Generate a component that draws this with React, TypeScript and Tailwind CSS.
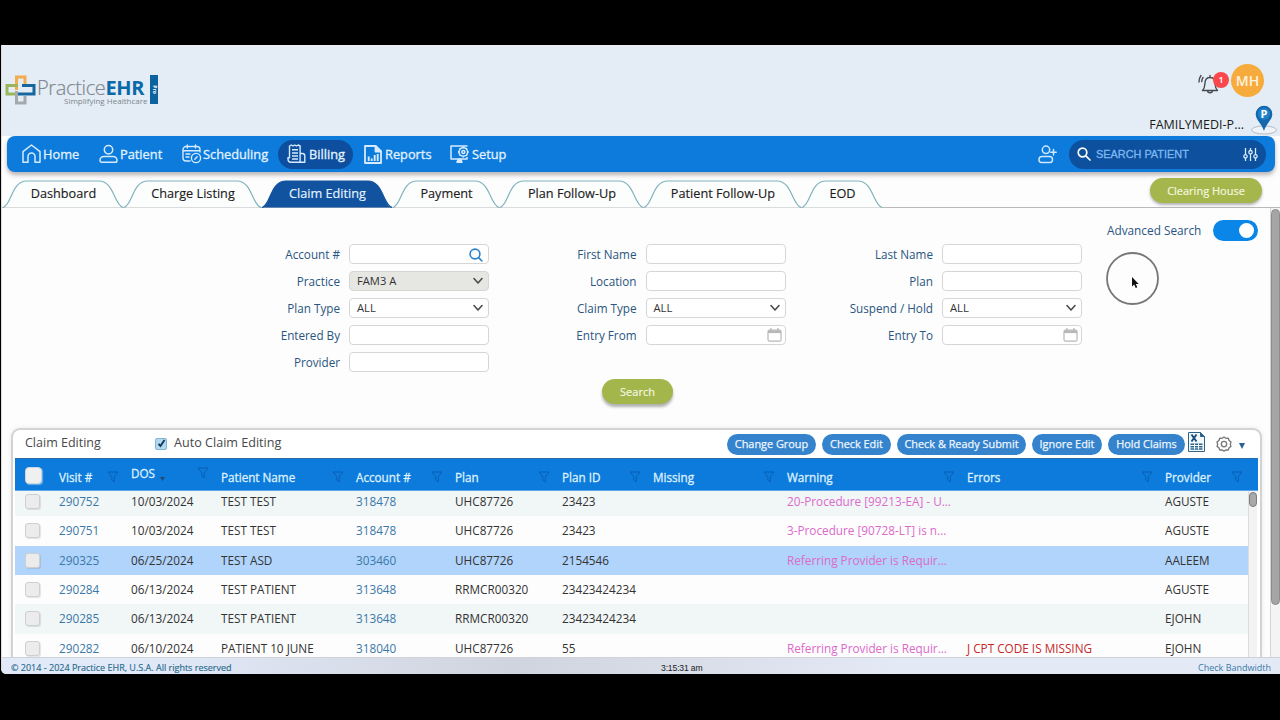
import type { ReactNode } from "react";

const Funnel = () => (
  <svg width="12" height="12" viewBox="0 0 12 12" fill="none" stroke="#0a5fb4" strokeWidth="1" className="shrink-0">
    <path d="M1 1h10L7.3 5.8V10.8L4.8 9V5.8Z" />
  </svg>
);

const HomeIcon = () => (
  <svg width="19" height="20" viewBox="0 0 19 20" fill="none" stroke="#d6ebff" strokeWidth="1.5" strokeLinejoin="round">
    <path d="M1 7.6 9.5 1 18 7.6V18.2H13V12.6a3.4 3.4 0 0 0-7 0V18.2H1Z" />
  </svg>
);
const PatientIcon = () => (
  <svg width="19" height="20" viewBox="0 0 19 20" fill="none" stroke="#d6ebff" strokeWidth="1.5">
    <circle cx="9.5" cy="5.8" r="4.2" />
    <path d="M5 12.4h9c2.300 0 4 1.800 4 4 0 1.100-.7 1.800-1.700 1.800H2.700C1.700 18.200 1 17.500 1 16.400c0-2.200 1.700-4 4-4Z" />
  </svg>
);
const ScheduleIcon = () => (
  <svg width="20" height="20" viewBox="0 0 20 20" fill="none" stroke="#d6ebff" strokeWidth="1.4" strokeLinecap="round">
    <path d="M8 17H4a3 3 0 0 1-3-3V5.500a3 3 0 0 1 3-3h11a3 3 0 0 1 3 3V8M1 6.800h17M5.300 1v3M13.500 1v3M4 10h4M4 13h3" />
    <circle cx="14" cy="14" r="4.600" />
    <path d="m12.800 15.200 2.400-2.400" />
  </svg>
);
const BillingIcon = () => (
  <svg width="19" height="20" viewBox="0 0 19 20" fill="none" stroke="#d6ebff" strokeWidth="1.4" strokeLinejoin="round">
    <path d="M13.500 18.300H4a3 3 0 0 1-3-3v-1.500h1.500V2l1.800-1 1.700 1 1.700-1 1.700 1 1.700-1 2 1v16.300ZM13.500 9.500h2a2.300 2.300 0 0 1 2.300 2.300v6.500h-4.300M5 5.800h6M5 9h6M5 12h6M5 15h6" />
  </svg>
);
const ReportsIcon = () => (
  <svg width="18" height="19" viewBox="0 0 18 19" fill="none" stroke="#d6ebff" strokeWidth="1.800" strokeLinejoin="round">
    <path d="M1 1h10.500L17 6.500V18H1Z" />
    <path d="M11.500 1v5.500H17Z" fill="#d6ebff" />
    <path d="M4.700 11.500V16M7.700 13.500V16M10.700 10v6M13.700 9v7" strokeWidth="1.900" />
  </svg>
);
const SetupIcon = () => (
  <svg width="19" height="19" viewBox="0 0 19 19" fill="none" stroke="#d6ebff" strokeWidth="1.500" strokeLinejoin="round">
    <path d="M17 1.500V1H1v13h16v-2" />
    <circle cx="13.300" cy="7" r="4.300" />
    <path d="M13.300 1.600v1.500M13.300 10.900v1.500M7.900 7h1.500M17.200 7h1.500M9.500 3.200l1 1M16.100 9.800l1 1M17.100 3.200l-1 1M10.500 9.800l-1 1" />
    <circle cx="13.300" cy="7" r="1.500" />
    <path d="M7 17.300h5l-1.200-3H8.200Z" fill="#d6ebff" />
  </svg>
);

const navItems: { label: string; icon: ReactNode; cls: string }[] = [
  { label: "Home", icon: <HomeIcon />, cls: "w-[77px] pl-[8px] gap-[2px]" },
  { label: "Patient", icon: <PatientIcon />, cls: "w-[83px] pl-[8px] gap-[2px]" },
  { label: "Scheduling", icon: <ScheduleIcon />, cls: "w-[104px] pl-[8px] gap-[1px]" },
  { label: "Billing", icon: <BillingIcon />, cls: "w-[75px] pl-[9px] gap-[3px] bg-[#0d4f9e] rounded-full" },
  { label: "Reports", icon: <ReportsIcon />, cls: "w-[89px] pl-[11px] gap-[3px]" },
  { label: "Setup", icon: <SetupIcon />, cls: "w-[75px] pl-[8px] gap-[3px]" },
];

const tabs = [
  { label: "Dashboard", w: 121, box: "w-[121px]", active: false },
  { label: "Charge Listing", w: 138, box: "w-[138px]", active: false },
  { label: "Claim Editing", w: 131, box: "w-[131px]", active: true },
  { label: "Payment", w: 107, box: "w-[107px]", active: false },
  { label: "Plan Follow-Up", w: 144, box: "w-[144px]", active: false },
  { label: "Patient Follow-Up", w: 158, box: "w-[158px]", active: false },
  { label: "EOD", w: 81, box: "w-[81px]", active: false },
];

const Tab = ({ label, w, box, active }: (typeof tabs)[number]) => (
  <div className={`relative flex h-[28px] shrink-0 items-center justify-center pb-[1px] pl-[2px] ${box}`}>
    <svg className="absolute inset-0" width={w} height="28" viewBox={`0 0 ${w} 28`}>
      <path
        d={`M1 27.500C10 25 9 1 25 1H${w - 24}C${w - 9} 1 ${w - 9} 25 ${w} 27.500`}
        fill={active ? "#12539f" : "#fcfefe"}
        stroke={active ? "#12539f" : "#7fb3bd"}
        strokeWidth="1.200"
      />
    </svg>
    <span className={`relative whitespace-nowrap text-[12.700px] font-medium ${active ? "text-[#e8f3ff] [-webkit-text-stroke:0.150px_#e8f3ff]" : "text-[#1c1c1c] [-webkit-text-stroke:0.150px_#1c1c1c]"}`}>{label}</span>
  </div>
);

const Chevron = () => (
  <svg width="10" height="8" viewBox="0 0 10 8" fill="none" stroke="#4c4c4c" strokeWidth="1.600" strokeLinecap="round" strokeLinejoin="round">
    <path d="m1 1.500 4 4.500 4-4.500" />
  </svg>
);
const Calendar = () => (
  <svg width="15" height="14" viewBox="0 0 15 14" fill="none" stroke="#b8b8b8" strokeWidth="1.200">
    <rect x="1" y="2.200" width="13" height="11" rx="1.500" />
    <path d="M1 3.800h13" strokeWidth="2.600" />
    <path d="M4 .3v2.500M11 .3v2.500" strokeWidth="1.600" />
  </svg>
);
const Magnifier = () => (
  <svg width="14" height="14" viewBox="0 0 14 14" fill="none" stroke="#2b83c9" strokeWidth="1.600" strokeLinecap="round">
    <circle cx="6" cy="6" r="4.900" />
    <path d="m9.600 9.600 3.300 3.400" />
  </svg>
);

type F = { label: string; value?: string; kind?: "select" | "date" | "lookup"; muted?: boolean };
const columns: { cls: string; fields: F[] }[] = [
  {
    cls: "w-[229px]",
    fields: [
      { label: "Account #", kind: "lookup" },
      { label: "Practice", kind: "select", value: "FAM3 A", muted: true },
      { label: "Plan Type", kind: "select", value: "ALL" },
      { label: "Entered By" },
      { label: "Provider" },
    ],
  },
  {
    cls: "w-[296.500px]",
    fields: [
      { label: "First Name" },
      { label: "Location" },
      { label: "Claim Type", kind: "select", value: "ALL" },
      { label: "Entry From", kind: "date" },
    ],
  },
  {
    cls: "w-[296.500px]",
    fields: [
      { label: "Last Name" },
      { label: "Plan" },
      { label: "Suspend / Hold", kind: "select", value: "ALL" },
      { label: "Entry To", kind: "date" },
    ],
  },
];

const Field = ({ label, value, kind, muted }: F) => (
  <div className="flex h-[20px] items-center justify-end gap-[9px]">
    <span className="whitespace-nowrap pt-[1px] text-[11.700px] leading-[19px] text-[#2a5580]">{label}</span>
    <div
      className={`flex h-[20px] w-[140px] items-center justify-between rounded-[4px] border border-[#d6d6d6] pl-[7px] ${
        kind === "select" ? "pr-[5px]" : "pr-[3px]"
      } ${muted ? "bg-[#e6e6e2]" : "bg-white"}`}
    >
      <span className="text-[11.200px] leading-[18px] text-[#333]">{value}</span>
      {kind === "select" && <Chevron />}
      {kind === "date" && <Calendar />}
      {kind === "lookup" && (
        <span className="pr-[2px] pt-[2px]">
          <Magnifier />
        </span>
      )}
    </div>
  </div>
);

const headGrid = "grid grid-cols-[44px_72px_90px_135px_99px_107px_91px_134px_180px_198px_90px]";
const rowGrid = "grid grid-cols-[44px_72px_90px_135px_99px_107px_91px_134px_180px_198px_84px]";

const headers = ["Visit #", "DOS", "Patient Name", "Account #", "Plan", "Plan ID", "Missing", "Warning", "Errors", "Provider"];

const rows = [
  ["290752", "10/03/2024", "TEST TEST", "318478", "UHC87726", "23423", "", "20-Procedure [99213-EA] - U...", "", "AGUSTE"],
  ["290751", "10/03/2024", "TEST TEST", "318478", "UHC87726", "23423", "", "3-Procedure [90728-LT] is n...", "", "AGUSTE"],
  ["290325", "06/25/2024", "TEST ASD", "303460", "UHC87726", "2154546", "", "Referring Provider is Requir...", "", "AALEEM"],
  ["290284", "06/13/2024", "TEST PATIENT", "313648", "RRMCR00320", "23423424234", "", "", "", "AGUSTE"],
  ["290285", "06/13/2024", "TEST PATIENT", "313648", "RRMCR00320", "23423424234", "", "", "", "EJOHN"],
  ["290282", "06/10/2024", "PATIENT 10 JUNE", "318040", "UHC87726", "55", "", "Referring Provider is Requir...", "J CPT CODE IS MISSING", "EJOHN"],
];

const rowBg = ["bg-[#f1f6f7]", "bg-[#fdfdfd]", "bg-[#b0d4fb]", "bg-[#fdfdfd]", "bg-[#f1f6f7]", "bg-[#fdfdfd]"];

const cellColor = (i: number) =>
  i === 0 || i === 3 ? "text-[#3a78a8]" : i === 7 ? "text-[#dc6acb]" : i === 8 ? "text-[#c4292b]" : "text-[#333]";

const actions = [
  { label: "Change Group", cls: "w-[89px]" },
  { label: "Check Edit", cls: "w-[69px]" },
  { label: "Check & Ready Submit", cls: "w-[129px]" },
  { label: "Ignore Edit", cls: "w-[70px]" },
  { label: "Hold Claims", cls: "w-[77px]" },
];

const Logo = () => (
  <div className="flex items-start">
    <svg className="-ml-[1px] shrink-0" width="31" height="30" viewBox="0 0 31 30" fill="none" strokeWidth="3">
      <path d="M11.500 15V2H20V12" stroke="#f2ac4b" />
      <path d="M13 10.500H2V19H11" stroke="#9ab55a" />
      <path d="M17 10.500H29V19H13" stroke="#16679f" />
      <path d="M11.500 16V28H20V21" stroke="#a3a9ad" />
    </svg>
    <div className="flex w-[113px] shrink-0 flex-col pt-px">
      <div className="ml-[1px] h-[22px] whitespace-nowrap text-[20px] leading-[23px] tracking-[-0.350px] text-[#808890]">
        <span className="font-light [-webkit-text-stroke:0.200px_#808890]">Practice</span>
        <span className="font-bold text-[#0a6aa9]">EHR</span>
      </div>
      <div className="ml-[28px] whitespace-nowrap text-[8px] leading-[6px] text-[#7b858d]">Simplifying Healthcare</div>
    </div>
    <div className="ml-[1px] flex h-[29px] w-[8px] items-center justify-center bg-[#0b639f]">
      <span className="rotate-90 text-[5px] font-bold leading-none text-white">Pro</span>
    </div>
  </div>
);

export default function App() {
  return (
    <div className="h-[720px] w-[1280px] overflow-hidden bg-black pt-[45px] font-['Open_Sans','Noto_Sans',sans-serif]">
      <div className="relative ml-[1px] flex h-[629px] w-[1279px] flex-col overflow-hidden rounded-bl-[5px] border-l border-[#ddd] bg-[#fdfdfd]">
        <header className="flex h-[91px] shrink-0 justify-between border-t border-[#f3eef2] bg-[#e4edf5]">
          <div className="pl-[4px] pt-[29px]">
            <Logo />
          </div>
          <div className="flex flex-col items-end">
            <div className="mr-[16px] mt-[18px] flex items-center">
              <div className="relative mr-[3px] mt-[6px] h-[24px] w-[30px]">
                <svg width="24" height="24" viewBox="0 0 24 24" fill="none" stroke="#454a50" strokeWidth="1.400" strokeLinecap="round" strokeLinejoin="round">
                  <path d="M4.500 18.500h15c-2.500-2.500-2.200-4-2.500-8-.3-3.200-2.300-5-5-5s-4.700 1.800-5 5c-.3 4 0 5.500-2.500 8ZM9.300 18.700a2.800 2.800 0 0 0 5.400 0M12 5.500V3.500M1 10c0-3 .8-5 2-6.500M3.700 9.500c.1-1.800.6-3 1.400-4" />
                </svg>
                <div className="absolute left-[15px] top-[0px] flex h-[16px] w-[16px] items-center justify-center rounded-full bg-[#f8484c] text-[9px] font-semibold text-white">1</div>
              </div>
              <div className="flex h-[33px] w-[33px] items-center justify-center rounded-full bg-[#f7ab3c] text-[14px] font-semibold text-[#fdf3e0]">MH</div>
            </div>
            <div className="flex items-start">
              <span className="mr-[6px] mt-[19px] text-[12.500px] leading-[17px] text-[#1a1a1a]">FAMILYMEDI-P...</span>
              <svg className="mr-[2px] mt-[8px]" width="28" height="30" viewBox="0 0 28 30">
                <ellipse cx="14" cy="25" rx="12.500" ry="4" fill="#edf3f8" stroke="#b4bdc4" strokeWidth="1" />
                <path d="M14 26C11.500 18 5.700 15 5.700 9a8.300 8.300 0 0 1 16.600 0C22.300 15 16.500 18 14 26Z" fill="#1467ad" />
                <circle cx="14" cy="8.800" r="6" fill="#2180c8" />
                <text x="14" y="13" textAnchor="middle" fontSize="11" fontWeight="700" fill="#fff" fontFamily="Open Sans">P</text>
              </svg>
            </div>
          </div>
        </header>

        <nav className="z-10 ml-[5px] flex h-[36px] w-[1268px] shrink-0 items-center justify-between rounded-[8px] bg-[#0c7bdb] pl-[7px] pr-[9px] shadow-[0_3px_4px_rgba(90,70,70,0.4)]">
          <div className="flex items-center">
            {navItems.map((n) => (
              <div key={n.label} className={`flex h-[29px] items-center text-[12.800px] font-medium text-[#e3f2ff] ${n.cls}`}>
                {n.icon}
                <span className="whitespace-nowrap pt-[1px] [-webkit-text-stroke:0.300px_#e3f2ff]">{n.label}</span>
              </div>
            ))}
          </div>
          <div className="flex items-center">
            <svg className="mr-[12px]" width="19" height="19" viewBox="0 0 19 19" fill="none" stroke="#cfe8ff" strokeWidth="1.500" strokeLinecap="round">
              <circle cx="8" cy="4.800" r="3.700" />
              <path d="M4 11.500h7.500c1.900 0 3 1.300 3 3 0 2-.8 3-2.300 3H3.300c-1.500 0-2.300-1-2.300-3 0-1.700 1.100-3 3-3ZM15.500 4.500v5.500M12.800 7.200h5.400" />
            </svg>
            <div className="flex h-[29px] w-[197px] items-center rounded-full bg-[#0d509d] pl-[8px] pr-[8px]">
              <svg width="14" height="14" viewBox="0 0 14 14" fill="none" stroke="#fff" strokeWidth="1.700" strokeLinecap="round">
                <circle cx="5.500" cy="5.500" r="4.300" />
                <path d="m8.800 8.800 4.200 4.200" />
              </svg>
              <span className="ml-[5px] font-['Liberation_Sans',sans-serif] text-[10.900px] text-[#7cb8f2] [-webkit-text-stroke:0.300px_#7cb8f2]">SEARCH PATIENT</span>
              <svg className="ml-auto" width="15" height="13" viewBox="0 0 15 13" fill="none" stroke="#d6ebff" strokeWidth="1.300">
                <path d="M2.500 0v6.500M2.500 10v3M7.500 0v2.500M7.500 6v7M12.500 0v6.500M12.500 10v3" />
                <circle cx="2.500" cy="8.300" r="1.700" />
                <circle cx="7.500" cy="4.200" r="1.700" />
                <circle cx="12.500" cy="8.300" r="1.700" />
              </svg>
            </div>
          </div>
        </nav>

        <div className="flex h-[36px] shrink-0 items-start justify-between border-b border-[#b9b9b9] pt-[8px]">
          <div className="flex">
            {tabs.map((t) => (
              <Tab key={t.label} {...t} />
            ))}
          </div>
          <div className="-mt-[2px] mr-[18px] flex h-[25px] w-[112px] items-center justify-center rounded-full bg-[#a4b64c] pt-[1px] text-[11px] font-medium text-[#f4f7dd] shadow-[0_2px_3px_rgba(0,0,0,0.300)] [-webkit-text-stroke:0.200px_#f4f7dd]">
            Clearing House
          </div>
        </div>

        <div className="flex min-h-0 flex-1">
          <main className="flex min-w-0 flex-1 flex-col">
            <div className="flex h-[220px] shrink-0 flex-col">
              <div className="flex">
                <div className="ml-[258px] flex gap-0 pt-[36px]">
                  {columns.map((c, i) => (
                    <div key={i} className={`flex flex-col gap-[7px] ${c.cls}`}>
                      {c.fields.map((f) => (
                        <Field key={f.label} {...f} />
                      ))}
                    </div>
                  ))}
                </div>
                <div className="flex flex-1 flex-col">
                  <div className="ml-[25px] mt-[12px] flex items-center gap-[12px]">
                    <span className="whitespace-nowrap text-[11.800px] leading-[19px] text-[#2a5580]">Advanced Search</span>
                    <div className="flex h-[21px] w-[45px] shrink-0 items-center justify-end rounded-full bg-[#0a86e8] pr-[4px]">
                      <div className="h-[15px] w-[15px] rounded-full bg-white" />
                    </div>
                  </div>
                  <svg className="ml-[24px] mt-[11px]" width="54" height="54" viewBox="0 0 54 54">
                    <circle cx="26.500" cy="26.500" r="25.500" fill="none" stroke="#777" strokeWidth="1.800" />
                    <path d="M26 25v9.500l2.200-2 1.500 3.500 1.600-.7-1.500-3.400h2.900Z" fill="#111" />
                  </svg>
                </div>
              </div>
              <div className="ml-[600px] mt-[7px] flex h-[25px] w-[71px] items-center justify-center rounded-full bg-[#a3b64c] pt-[1px] text-[11px] text-[#f6f8e4] shadow-[0_3px_3px_rgba(0,0,0,0.300)] [-webkit-text-stroke:0.150px_#f6f8e4]">
                Search
              </div>
            </div>

            <section className="ml-[9px] mr-[8px] flex min-h-0 flex-1 flex-col rounded-t-[9px] border-2 border-b-0 border-[#d3d3d3] bg-white px-[2px] shadow-[0_0_5px_rgba(0,0,0,0.080)]">
              <div className="flex h-[28px] shrink-0 items-center pb-[1px]">
                <span className="ml-[10px] w-[130px] text-[12.500px] text-[#484848]">Claim Editing</span>
                <span className="flex h-[12px] w-[12px] items-center justify-center rounded-[2px] border border-[#85b4d2] bg-[#b3d9f0]">
                  <svg width="9" height="9" viewBox="0 0 9 9" fill="none" stroke="#123a5c" strokeWidth="1.900">
                    <path d="M1.500 4.800 3.500 7 7.500 1" />
                  </svg>
                </span>
                <span className="ml-[7px] text-[12.600px] text-[#484848]">Auto Claim Editing</span>
                <div className="ml-auto flex items-center gap-[6px] pt-[2px]">
                  {actions.map((a) => (
                    <div key={a.label} className={`flex h-[21px] items-center justify-center whitespace-nowrap rounded-full bg-[#3483cc] text-[10.900px] font-medium text-[#eef6ff] [-webkit-text-stroke:0.250px_#eef6ff] ${a.cls}`}>
                      {a.label}
                    </div>
                  ))}
                </div>
                <svg className="ml-[3px] -mt-[3px]" width="17" height="20" viewBox="0 0 17 20" fill="none" stroke="#2f6489" strokeWidth="1">
                  <path d="M.5.500h12l4 4v15H.5Z" fill="#f2f8fc" />
                  <path d="M12.500.500v4h4Z" fill="#2f6489" />
                  <path d="m3.500 2.500 5 7M8.500 2.500l-5 7" strokeWidth="1.900" stroke="#154c78" />
                  <path d="M2.500 12.300h12M2.500 14.700h12M2.500 17h12" strokeWidth="1.500" />
                  <path d="M6.500 11.500v6M10.500 11.500v6" stroke="#f2f8fc" />
                </svg>
                <svg className="ml-[11px]" width="16" height="16" viewBox="0 0 16 16" fill="none" stroke="#777" strokeWidth="1.300" strokeLinejoin="round">
                  <path d="M8 1 9.900 2.300 12.300 2.200 13.100 4.500 15 6 14.300 8.200 15 10.400 13.100 11.800 12.300 14 9.900 13.900 8 15.200 6.100 13.900 3.700 14 2.900 11.800 1 10.400 1.700 8.200 1 6 2.900 4.500 3.700 2.200 6.100 2.300Z" />
                  <circle cx="8" cy="8.100" r="2.700" />
                </svg>
                <svg className="ml-[7px] mr-[13px] mt-[5px]" width="6" height="6" viewBox="0 0 6 6">
                  <path d="M0 0h6L3 6Z" fill="#2c6095" />
                </svg>
              </div>

              <div className={`${headGrid} z-10 h-[33px] shrink-0 items-center border-b border-[#5aa9ee] border-t border-t-[#2a6cb0] bg-[#0c7bdb] pt-[4px]`}>
                <div className="-mt-[3px] ml-[10px] h-[17px] w-[17px] rounded-[4px] border border-[#cdd6de] bg-[#f0f0f0] shadow-[1px_1px_1px_rgba(255,255,255,0.400)]" />
                {headers.map((h) => (
                  <div key={h} className={`flex items-center justify-between pr-[12px] ${h === "DOS" ? "-mt-[8px]" : ""}`}>
                    <span className="flex items-end whitespace-nowrap pt-[1px] text-[11.700px] leading-[17px] font-medium text-[#dff0ff] [-webkit-text-stroke:0.300px_#dff0ff]">
                      {h}
                      {h === "DOS" && (
                        <svg className="mb-[1px] ml-[5px]" width="5" height="4" viewBox="0 0 5 4">
                          <path d="M0 0h5L2.500 4Z" fill="#254a70" />
                        </svg>
                      )}
                    </span>
                    <Funnel />
                  </div>
                ))}
              </div>

              <div className="flex min-h-0 flex-1 overflow-hidden">
                <div className="-mt-[4px] flex w-[1233px] flex-col">
                  {rows.map((r, i) => (
                    <div key={r[0]} className={`${rowGrid} h-[29.330px] shrink-0 items-center overflow-hidden ${rowBg[i]}`}>
                      <div className="ml-[10px] h-[15px] w-[15px] rounded-[3px] border border-[#cfcfcf] bg-[#ececec] shadow-[1px_1px_1px_rgba(0,0,0,0.100)]" />
                      {r.map((c, j) => (
                        <span key={j} className={`whitespace-nowrap text-[11.750px] leading-[17px] ${cellColor(j)}`}>
                          {c}
                        </span>
                      ))}
                    </div>
                  ))}
                </div>
                <div className="w-[9px] border-l border-[#dcdcdc] bg-[#f3f3f3] pt-[1px]">
                  <div className="h-[15px] w-[8px] rounded-full border border-[#7d7d7d] bg-[#a9a9a9]" />
                </div>
              </div>
            </section>
          </main>
          <div className="w-[10px] border-l border-[#d5d5d5] bg-[#f4f4f4] pt-[1px]">
            <div className="h-[396px] rounded-full border border-[#8c8c8c] bg-[#a5a5a5]" />
          </div>
        </div>

        <footer className="grid h-[17px] shrink-0 grid-cols-3 items-center border-t border-[#cfd2d8] bg-linear-to-r from-[#e2eafa] from-10% via-[#d0d4de] via-40% to-[#e4e9f6] to-70% pl-[9px] pr-[9px] pt-[4px] text-[9px] leading-[12px]">
          <span className="whitespace-nowrap text-[#2a6b8c] [-webkit-text-stroke:0.150px_#2a6b8c]">© 2014 - 2024 Practice EHR, U.S.A. All rights reserved</span>
          <span className="ml-[230px] whitespace-nowrap font-['Liberation_Sans',sans-serif] text-[8.600px] tracking-[-0.150px] text-[#222]">3:15:31 am</span>
          <span className="text-right text-[#3a7ba8]">Check Bandwidth</span>
        </footer>
      </div>
    </div>
  );
}
